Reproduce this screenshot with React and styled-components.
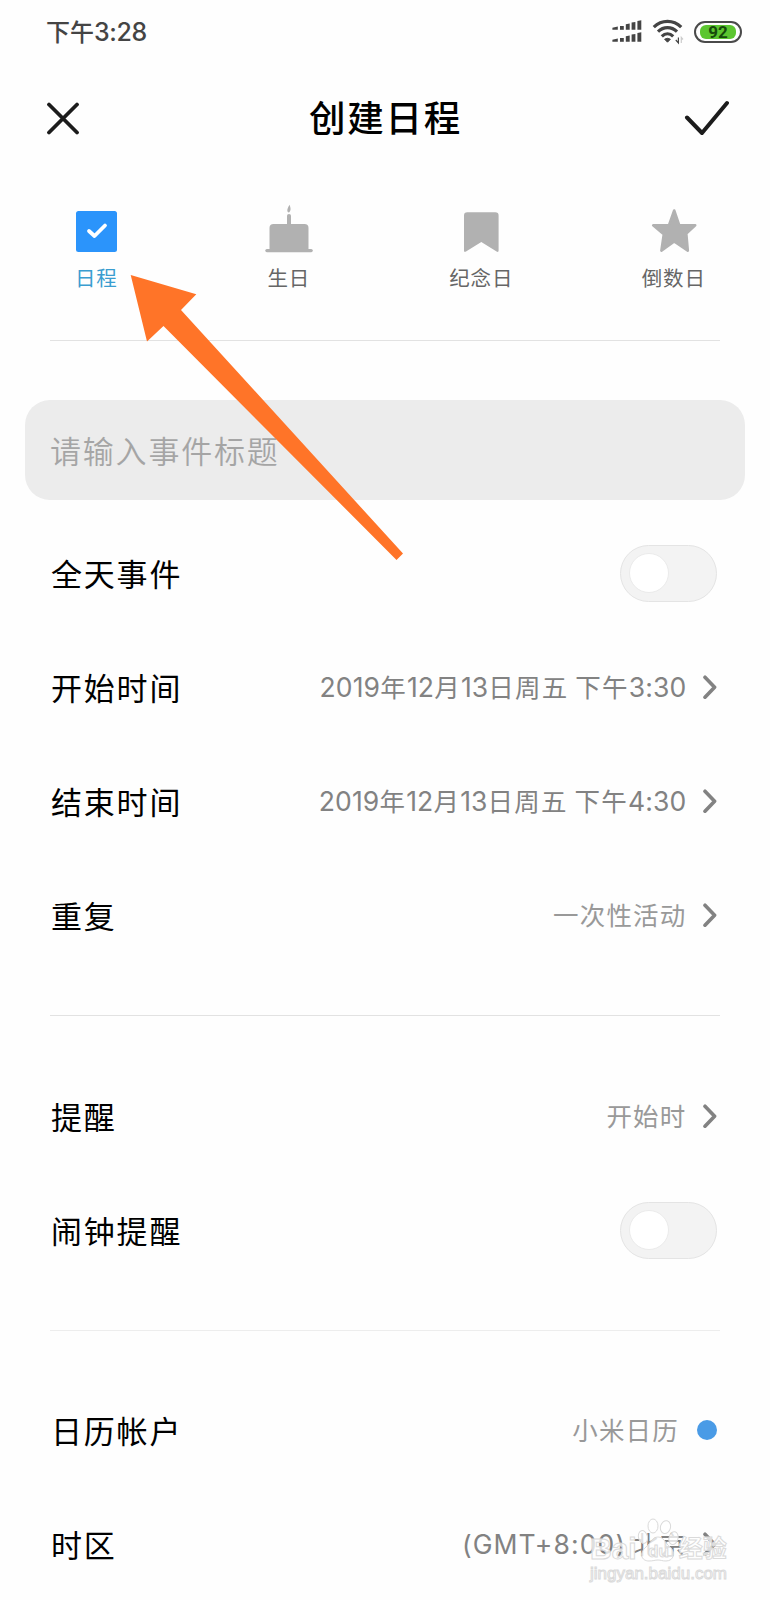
// 创建日程页面
import React, { useState } from "react";
import styled, { createGlobalStyle } from "styled-components";

// 把文字拆成中文和数字两部分，分别设置字体
const MixedText = ({ text, gap }) =>
  text
    .split(/([0-9A-Z+:()]+)/)
    .filter(Boolean)
    .map((part, index) =>
      /[0-9]/.test(part) ? (
        <Latin $gap={gap} key={index}>
          {part}
        </Latin>
      ) : (
        <span key={index}>{part}</span>
      )
    );

const SignalIcon = () => (
  <svg width="30" height="24" viewBox="0 0 30 24" fill="#444">
    {[0, 12].map((y) => (
      <g key={y} transform={`translate(0 ${y})`}>
        <path d="M0.4 7.8 5.8 6.6V9.8H0.4z" />
        <path d="M8 6h3.8v3.8H8z" />
        <path d="M13.8 4.2l3.9-.7v6.3h-3.9z" />
        <path d="M19.6 2.6l3.8-.7v7.9h-3.8z" />
        <path d="M25.4 1.1l3.9-.8v9.5h-3.9z" />
      </g>
    ))}
  </svg>
);

const WifiIcon = () => (
  <svg width="32" height="26" viewBox="0 0 32 26" fill="none" stroke="#444">
    <path d="M1.8 8.2C9.6 0.4 21.4 0.4 29.2 8.2" strokeWidth="3.2" />
    <path d="M6 12.6C11.6 7.2 19.4 7.2 25 12.6" strokeWidth="3.2" />
    <path d="M9.8 17.3C13.2 14 17.8 14 21.2 17.3" strokeWidth="3.2" />
    <path d="M12.6 20.2Q15.5 18.4 18.4 20.2L15.5 23.2z" fill="#444" />
    <path d="M26.4 18.5V24L23.8 21" strokeWidth="1.2" />
    <path d="M29.3 24V18.5L31 20.5" stroke="#ccc" strokeWidth="1.2" />
  </svg>
);

const ScheduleIcon = () => (
  <svg width="46" height="50" viewBox="0 0 46 50">
    <rect x="3" y="7" width="41" height="41" rx="2.5" fill="#2b94fb" />
    <path
      d="M16 27 21.5 32 32 21.5"
      fill="none"
      stroke="#fff"
      strokeWidth="3.8"
      strokeLinecap="round"
      strokeLinejoin="round"
    />
  </svg>
);

const BirthdayIcon = () => (
  <svg width="48" height="50" viewBox="0 0 48 50" fill="#b1b1b1">
    <path d="M24.6 0.8C25.6 4 26.4 6.4 24 8.5C21.6 8 21.8 5.2 24.6 0.8z" />
    <path d="M22 11.5q0-1.5 2-1.5t2 1.5V21h-4z" />
    <path d="M4.5 24q0-4 4-4h31q4 0 4 4v22h-39z" />
    <rect x="0.3" y="45" width="47.5" height="3.2" rx="1.6" />
  </svg>
);

const MemorialIcon = () => (
  <svg width="46" height="50" viewBox="0 0 46 50" fill="#b1b1b1">
    <path d="M6 11.5q0-3.3 3.3-3.3h28q3.3 0 3.3 3.3V46.6q0 2.2-2 1L23.3 38 8 47.6q-2 1.2-2-1z" />
  </svg>
);

const CountdownIcon = () => (
  <svg width="46" height="50" viewBox="0 0 46 50">
    <path
      d="M23.2 6.5 28.3 21.3H44.2L35.3 29.5 36.8 46.6 23.2 37.5 10.4 46.6 12.8 30.3 2.2 21.3H18z"
      fill="#b1b1b1"
      stroke="#b1b1b1"
      strokeWidth="2.6"
      strokeLinejoin="round"
    />
  </svg>
);

const Chevron = () => (
  <svg width="15" height="26" viewBox="0 0 15 26" fill="none">
    <path
      d="M3 3.2 12.6 13.2 3 23.2"
      stroke="#828282"
      strokeWidth="3.6"
      strokeLinecap="round"
      strokeLinejoin="round"
    />
  </svg>
);

// 顶部分类
const tabs = [
  { name: "日程", icon: <ScheduleIcon /> },
  { name: "生日", icon: <BirthdayIcon /> },
  { name: "纪念日", icon: <MemorialIcon /> },
  { name: "倒数日", icon: <CountdownIcon /> },
];

// 各组设置项
const groups = [
  [
    { label: "全天事件", type: "switch" },
    { label: "开始时间", value: "2019年12月13日周五 下午3:30" },
    { label: "结束时间", value: "2019年12月13日周五 下午4:30" },
    { label: "重复", value: "一次性活动", light: true },
  ],
  [
    { label: "提醒", value: "开始时", light: true },
    { label: "闹钟提醒", type: "switch" },
  ],
  [
    { label: "日历帐户", value: "小米日历", type: "dot", light: true },
    { label: "时区", value: "(GMT+8:00) 北京", gap: "1.1px" },
  ],
];

const SettingRow = ({ item }) => {
  const [on, setOn] = useState(false);

  if (item.type === "switch") {
    return (
      <Row>
        <Label>{item.label}</Label>
        <Switch $on={on} onClick={() => setOn(!on)}>
          <Knob />
        </Switch>
      </Row>
    );
  }

  return (
    <Row>
      <Label>{item.label}</Label>
      <Value $light={item.light} $gap={item.type === "dot" ? 18 : 15.5}>
        <ValueText $light={item.light}>
          <MixedText text={item.value} gap={item.gap || "0.15px"} />
        </ValueText>
        {item.type === "dot" ? <Dot /> : <Chevron />}
      </Value>
    </Row>
  );
};

const App = () => {
  const [activeTab, setActiveTab] = useState("日程");

  return (
    <Page>
      <GlobalStyle />
      <StatusBar>
        <Time>
          <MixedText text="下午3:28" gap="-0.4px" />
        </Time>
        <StatusIcons>
          <SignalIcon />
          <WifiIcon />
          <Battery>
            <BatteryLevel>92</BatteryLevel>
          </Battery>
        </StatusIcons>
      </StatusBar>

      <Header>
        <svg width="34" height="34" viewBox="0 0 34 34">
          <path d="M3 3.5 31 31.5M31 3.5 3 31.5" stroke="#1c1c1c" strokeWidth="3.8" strokeLinecap="round" />
        </svg>
        <Title>创建日程</Title>
        <svg width="46" height="36" viewBox="0 0 46 36" fill="none">
          <path
            d="M4 17.5 19 33 44 3"
            stroke="#1c1c1c"
            strokeWidth="4"
            strokeLinecap="round"
            strokeLinejoin="round"
          />
        </svg>
      </Header>

      <Tabs>
        {tabs.map((tab) => (
          <Tab key={tab.name} onClick={() => setActiveTab(tab.name)}>
            {tab.icon}
            <TabName $active={activeTab === tab.name}>{tab.name}</TabName>
          </Tab>
        ))}
      </Tabs>
      <Divider />

      <TitleInput placeholder="请输入事件标题" />

      {groups.map((group, index) => (
        <React.Fragment key={index}>
          {index > 0 && <Divider $light={index > 1} />}
          <Group $top={[0, 43, 42][index]}>
            {group.map((item) => (
              <SettingRow item={item} key={item.label} />
            ))}
          </Group>
        </React.Fragment>
      ))}

      <Arrow width="280" height="290" viewBox="130 274 280 290">
        <path
          d="M130.7 275 196.3 294.3 181 310 403 553.5 396.5 560 163.5 326 147 341.5z"
          fill="#ff7428"
        />
      </Arrow>

      <Watermark>
        <Brand>
          <span>Bai</span>
          <Paw width="42" height="46" viewBox="0 0 42 46">
            <ellipse cx="16" cy="8" rx="5" ry="7" />
            <ellipse cx="28.5" cy="9" rx="5" ry="6.5" transform="rotate(14 28 9)" />
            <ellipse cx="6" cy="19" rx="4.5" ry="6.5" transform="rotate(-14 6 19)" />
            <ellipse cx="36.5" cy="20" rx="4.5" ry="6.5" transform="rotate(14 36 20)" />
            <path d="M21 19C27 19 28 25 33 29C39 34 37 43 29 43C25 43 24 42 21 42C18 42 16 43 12 43C4 43 2 35 9 29C14 25 15 19 21 19z" />
            <text x="11" y="39">du</text>
          </Paw>
          <span>经验</span>
        </Brand>
        <Site>jingyan.baidu.com</Site>
      </Watermark>
    </Page>
  );
};

const GlobalStyle = createGlobalStyle`
  * {
    box-sizing: border-box;
  }

  body {
    margin: 0;
    background-color: #fefefe;
    font-family: "Noto Sans CJK SC", sans-serif;
  }

  svg {
    display: block;
    flex-shrink: 0;
  }
`;

const Page = styled.div`
  position: relative;
  width: 770px;
  height: 1600px;
  overflow: hidden;
  background-color: #fefefe;
`;

const Latin = styled.span`
  font-family: Inter, "Noto Sans CJK SC", sans-serif;
  font-size: 1.04em;
  font-feature-settings: "calt" 0;
  letter-spacing: ${(props) => props.$gap};
`;

const StatusBar = styled.div`
  display: flex;
  align-items: center;
  justify-content: space-between;
  height: 64px;
  padding: 0 28px 0 46px;
`;

const Time = styled.div`
  color: #444;
  font-size: 24px;
  font-weight: 500;
  line-height: 1;
`;

const StatusIcons = styled.div`
  display: flex;
  align-items: center;
  gap: 10px;
`;

const Battery = styled.div`
  width: 48px;
  height: 22px;
  padding: 2px 4px;
  border: 2px solid #4a4a4a;
  border-radius: 11px;
`;

const BatteryLevel = styled.div`
  height: 14px;
  border-radius: 6px;
  background-color: #5cc630;
  color: #174b0b;
  font-family: Roboto, sans-serif;
  font-size: 17px;
  font-weight: 700;
  line-height: 15px;
  text-align: center;
`;

const Header = styled.div`
  display: flex;
  align-items: center;
  justify-content: space-between;
  height: 108px;
  padding: 0 41px 0 46px;
`;

const Title = styled.div`
  margin-left: 8px;
  padding-bottom: 1px;
  color: #000;
  font-size: 36.5px;
  font-weight: 500;
  line-height: 1;
  letter-spacing: 1.8px;
`;

const Tabs = styled.div`
  display: grid;
  grid-template-columns: repeat(4, 1fr);
  height: 168px;
  padding-top: 32px;
`;

const Tab = styled.div`
  display: flex;
  flex-direction: column;
  align-items: center;
  cursor: pointer;
`;

const TabName = styled.div`
  margin-top: 12px;
  color: ${(props) => (props.$active ? "#3a9dd0" : "#666")};
  font-size: 20.5px;
  line-height: 22px;
  letter-spacing: 0.8px;
`;

const Divider = styled.div`
  height: 1px;
  margin: 0 50px;
  background-color: ${(props) => (props.$light ? "#ededed" : "#e2e2e2")};
`;

const TitleInput = styled.input`
  display: block;
  width: 720px;
  height: 100px;
  margin: 59px 0 16px 25px;
  padding: 0 25px 2px;
  border: none;
  border-radius: 25px;
  outline: none;
  background-color: #ececec;
  color: #000;
  font-family: inherit;
  font-size: 31px;
  letter-spacing: 1.8px;

  &::placeholder {
    color: #a5a5a5;
    font-weight: 350;
  }
`;

const Group = styled.div`
  padding: ${(props) => props.$top}px 53px 43px 51px;
`;

const Row = styled.div`
  display: flex;
  align-items: center;
  justify-content: space-between;
  height: 114px;
`;

const Label = styled.div`
  padding-bottom: 2px;
  color: #000;
  font-size: 31px;
  line-height: 1;
  letter-spacing: 1.8px;
`;

const Value = styled.div`
  display: flex;
  align-items: center;
  gap: ${(props) => props.$gap}px;
  color: ${(props) => (props.$light ? "#999" : "#828282")};
`;

const ValueText = styled.div`
  padding-bottom: ${(props) => (props.$light ? 3 : 1)}px;
  font-size: 25.5px;
  line-height: 1;
  letter-spacing: 1.2px;
  white-space: pre;
`;

const Switch = styled.div`
  display: flex;
  align-items: center;
  justify-content: ${(props) => (props.$on ? "flex-end" : "flex-start")};
  width: 97px;
  height: 57px;
  padding: 0 8px;
  border: 1px solid #e4e4e4;
  border-radius: 29px;
  background-color: #f3f3f3;
  cursor: pointer;
`;

const Knob = styled.div`
  width: 40px;
  height: 40px;
  border: 1px solid #ebebeb;
  border-radius: 50%;
  background-color: #fff;
`;

const Dot = styled.div`
  width: 20px;
  height: 20px;
  border-radius: 50%;
  background-color: #4a9be6;
`;

const Arrow = styled.svg`
  position: absolute;
  top: 274px;
  left: 130px;
  pointer-events: none;
`;

const Watermark = styled.div`
  position: absolute;
  right: 38px;
  bottom: 17px;
  width: 142px;
  color: rgba(255, 255, 255, 0.75);
  font-family: "Liberation Sans", "Noto Sans CJK SC", sans-serif;
  -webkit-text-stroke: 1px #dadada;
  pointer-events: none;
`;

const Brand = styled.div`
  display: flex;
  align-items: flex-end;
  height: 46px;
  font-size: 30px;
  font-weight: 700;
  line-height: 30px;
  white-space: nowrap;

  & span:last-child {
    font-size: 24px;
  }
`;

const Paw = styled.svg`
  fill: rgba(255, 255, 255, 0.75);
  stroke: #dadada;
  stroke-width: 1;

  & text {
    font-size: 17px;
  }
`;

const Site = styled.div`
  margin-top: 1px;
  font-size: 17px;
  line-height: 18px;
  white-space: nowrap;
`;

export default App;
